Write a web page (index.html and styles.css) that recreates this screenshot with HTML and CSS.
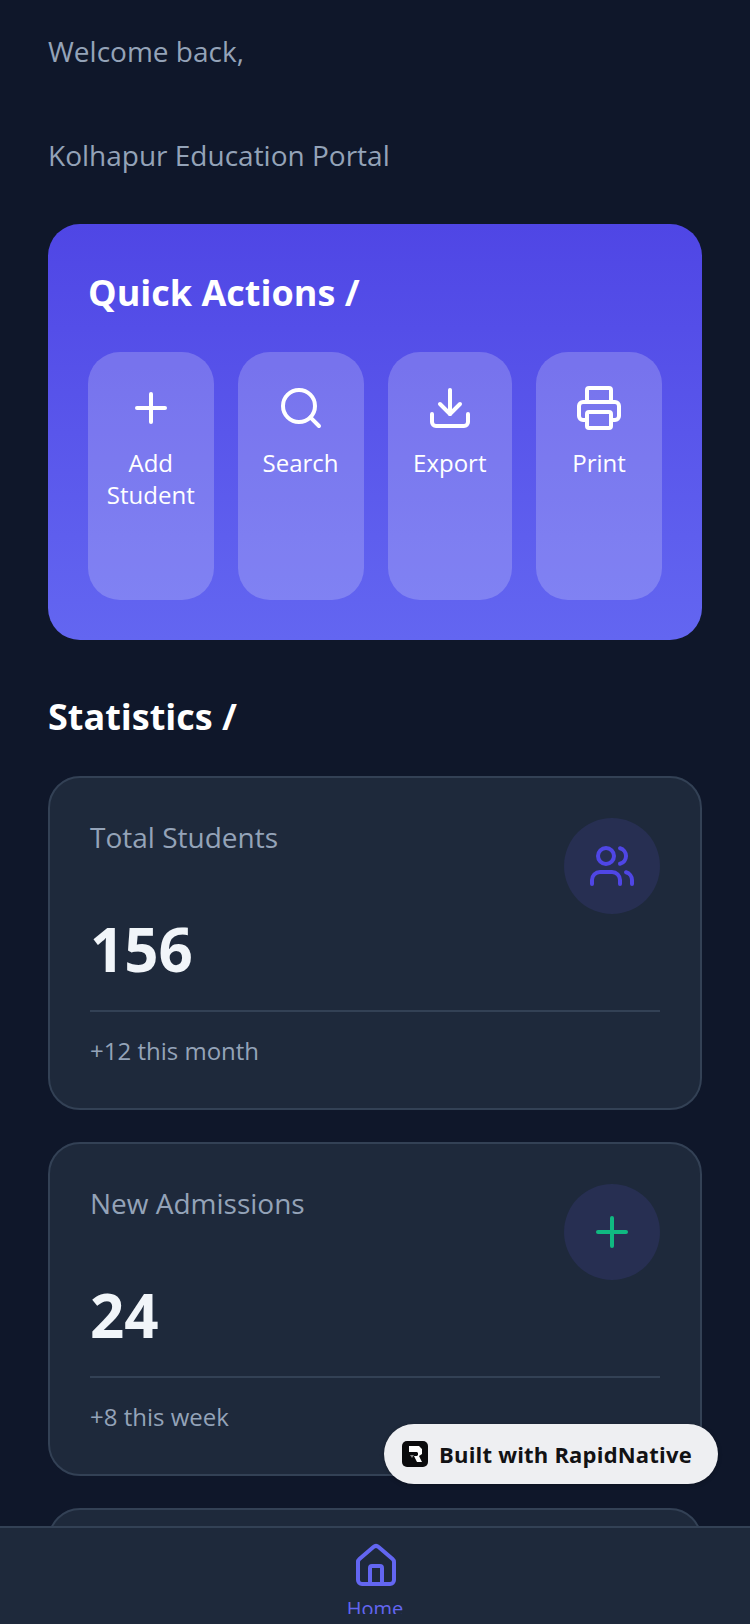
FILE: index.html
```html
<!DOCTYPE html>
<html>
<head>
    <title>Kolhapur Education Portal</title>
    <link rel="stylesheet" href="styles.css">
</head>
<body>
    <div class="screen">
        <div class="content">
            <p class="welcome">Welcome back,</p>
            <p class="portal">Kolhapur Education Portal</p>

            <section class="actions-card">
                <h2 class="actions-title">Quick Actions /</h2>
                <div class="actions-row">
                    <div class="action-tile">
                        <svg class="icon-48" viewBox="0 0 24 24"><path d="M5 12h14"/><path d="M12 5v14"/></svg>
                        <span>Add Student</span>
                    </div>
                    <div class="action-tile">
                        <svg class="icon-48" viewBox="0 0 24 24"><circle cx="11" cy="11" r="8"/><path d="m21 21-4.3-4.3"/></svg>
                        <span>Search</span>
                    </div>
                    <div class="action-tile">
                        <svg class="icon-48" viewBox="0 0 24 24"><path d="M21 15v4a2 2 0 0 1-2 2H5a2 2 0 0 1-2-2v-4"/><path d="M7 10l5 5 5-5"/><path d="M12 15V3"/></svg>
                        <span>Export</span>
                    </div>
                    <div class="action-tile">
                        <svg class="icon-48" viewBox="0 0 24 24"><path d="M6 18H4a2 2 0 0 1-2-2v-5a2 2 0 0 1 2-2h16a2 2 0 0 1 2 2v5a2 2 0 0 1-2 2h-2"/><path d="M6 9V3a1 1 0 0 1 1-1h10a1 1 0 0 1 1 1v6"/><rect x="6" y="14" width="12" height="8" rx="1"/></svg>
                        <span>Print</span>
                    </div>
                </div>
            </section>

            <h2 class="section-title">Statistics /</h2>

            <div class="stat-card">
                <div class="stat-top">
                    <div>
                        <p class="stat-label">Total Students</p>
                        <p class="stat-value">156</p>
                    </div>
                    <div class="stat-icon indigo">
                        <svg class="icon-48" viewBox="0 0 24 24"><path d="M16 21v-2a4 4 0 0 0-4-4H6a4 4 0 0 0-4 4v2"/><circle cx="9" cy="7" r="4"/><path d="M22 21v-2a4 4 0 0 0-3-3.87"/><path d="M16 3.13a4 4 0 0 1 0 7.75"/></svg>
                    </div>
                </div>
                <p class="stat-note">+12 this month</p>
            </div>

            <div class="stat-card">
                <div class="stat-top">
                    <div>
                        <p class="stat-label">New Admissions</p>
                        <p class="stat-value">24</p>
                    </div>
                    <div class="stat-icon green">
                        <svg class="icon-48" viewBox="0 0 24 24"><path d="M5 12h14"/><path d="M12 5v14"/></svg>
                    </div>
                </div>
                <p class="stat-note">+8 this week</p>
            </div>

            <div class="stat-card"></div>
        </div>

        <nav class="tab-bar">
            <div class="tab-item">
                <svg class="icon-48 tab-icon" viewBox="0 0 24 24"><path d="M15 21v-8a1 1 0 0 0-1-1h-4a1 1 0 0 0-1 1v8"/><path d="M3 10a2 2 0 0 1 .709-1.528l7-5.999a2 2 0 0 1 2.582 0l7 5.999A2 2 0 0 1 21 10v9a2 2 0 0 1-2 2H5a2 2 0 0 1-2-2z"/></svg>
                <span>Home</span>
            </div>
        </nav>

        <div class="built-badge">
            <svg class="built-logo" viewBox="0 0 26 26">
                <rect width="26" height="26" rx="5" fill="#0b0b0d"/>
                <path d="M7 5h10l3 3v5l-3 2 3 6h-5l-3-6h3l1-1v-2l-1-1H7z" fill="#fff"/>
                <path d="M8 14h4l-2 3z" fill="#8a8a8a"/>
            </svg>
            <span>Built with RapidNative</span>
        </div>
    </div>
</body>
</html>
```

FILE: styles.css
```css
* {
    box-sizing: border-box;
}
html, body {
    margin: 0;
    padding: 0;
}
body {
    font-family: "Open Sans", sans-serif;
    background-color: #0f172a;
}
p, h2 {
    margin: 0;
}
.screen {
    position: relative;
    display: flex;
    flex-direction: column;
    width: 750px;
    height: 1624px;
    overflow: hidden;
}
.content {
    flex: 1;
    min-height: 0;
    overflow: hidden;
    padding: 31px 48px 0;
}
.welcome,
.portal {
    font-size: 28px;
    line-height: 40px;
    color: #94a3b8;
}
.portal {
    margin-top: 64px;
}
.icon-48 {
    width: 48px;
    height: 48px;
    fill: none;
    stroke: currentColor;
    stroke-width: 2;
    stroke-linecap: round;
    stroke-linejoin: round;
    flex-shrink: 0;
}

/* quick actions */
.actions-card {
    margin-top: 49px;
    height: 416px;
    padding: 41px 40px 40px;
    border-radius: 32px;
    background: linear-gradient(180deg, #4f46e5, #6366f1);
}
.actions-title {
    font-size: 36px;
    line-height: 56px;
    font-weight: 700;
    color: #fff;
}
.actions-row {
    display: grid;
    grid-template-columns: 125.5px 126px 124.5px 126px;
    gap: 24px;
    margin-top: 31px;
}
.action-tile {
    display: flex;
    flex-direction: column;
    align-items: center;
    height: 248px;
    padding: 32px 16px 0;
    border-radius: 32px;
    background: rgba(255, 255, 255, 0.2);
    color: #fff;
    text-align: center;
    font-size: 24px;
    line-height: 32px;
}
.action-tile span {
    margin-top: 15px;
}

/* statistics */
.section-title {
    margin-top: 49px;
    font-size: 36px;
    line-height: 55px;
    font-weight: 700;
    color: #fff;
}
.stat-card {
    height: 334px;
    margin-top: 32px;
    padding: 40px;
    border: 2px solid #334155;
    border-radius: 32px;
    background-color: #1e293b;
}
.stat-top {
    display: flex;
    justify-content: space-between;
    height: 194px;
    border-bottom: 2px solid #334155;
}
.stat-label {
    margin-top: -1px;
    font-size: 28px;
    line-height: 40px;
    color: #94a3b8;
}
.stat-value {
    margin-top: 50px;
    font-size: 60px;
    line-height: 84px;
    font-weight: 700;
    color: #f1f5f9;
}
.stat-icon {
    display: flex;
    align-items: center;
    justify-content: center;
    width: 96px;
    height: 96px;
    border-radius: 50%;
    background-color: #272f52;
}
.stat-icon.indigo {
    color: #4f46e5;
}
.stat-icon.green {
    color: #10b981;
}
.stat-note {
    margin-top: 21px;
    font-size: 24px;
    line-height: 36px;
    color: #94a3b8;
}

/* bottom navigation */
.tab-bar {
    flex-shrink: 0;
    display: flex;
    justify-content: center;
    height: 98px;
    padding-top: 14px;
    border-top: 2px solid #334155;
    background-color: #1e293b;
}
.tab-item {
    display: flex;
    flex-direction: column;
    align-items: center;
    height: 72px;
    overflow: hidden;
    color: #6366f1;
    font-size: 20px;
    line-height: 28px;
}
.tab-icon {
    margin-left: 2px;
}
.tab-item span {
    margin-top: 5px;
}

/* floating pill */
.built-badge {
    position: absolute;
    left: 384px;
    top: 1424px;
    display: flex;
    align-items: center;
    gap: 11px;
    width: 334px;
    height: 60px;
    padding-left: 18px;
    border-radius: 30px;
    background-color: #eeeff2;
    box-shadow: 0 1px 4px rgba(0, 0, 0, 0.25);
    color: #121214;
    font-size: 22px;
    font-weight: 700;
    letter-spacing: 0.2px;
}
.built-logo {
    width: 26px;
    height: 26px;
}
```
